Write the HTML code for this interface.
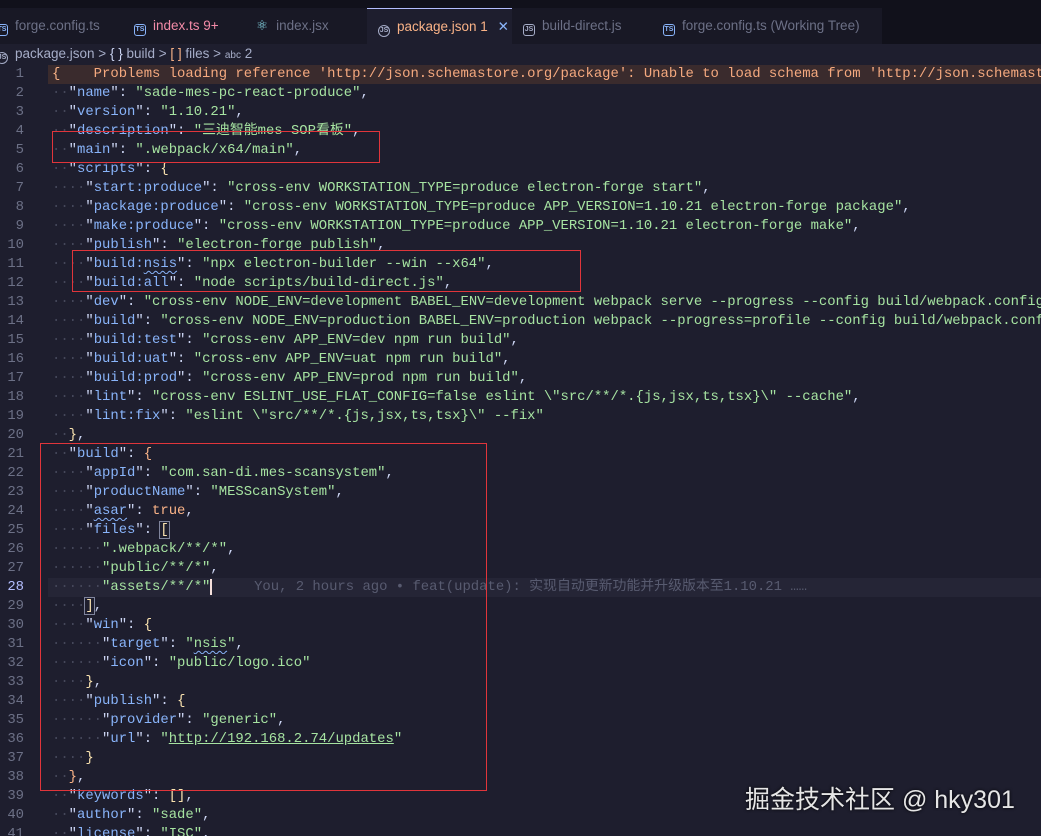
<!DOCTYPE html>
<html><head><meta charset="utf-8">
<style>
*{margin:0;padding:0;box-sizing:border-box}
html,body{width:1041px;height:836px;overflow:hidden}
body{background:#1e1e2e;position:relative;font-family:"Liberation Sans","Noto Sans CJK SC",sans-serif}
.tabs{position:absolute;left:0;top:0;width:1041px;height:44px;background:#11111b;overflow:hidden}
.tabstrip{position:absolute;left:0;top:8px;width:882px;height:36px;background:#181825}
.tab{position:absolute;top:8px;height:36px;line-height:36px;font-size:13.5px;color:#6c7086;white-space:nowrap}
.tab.active{background:#1e1e2e;color:#fab387;border-top:1px solid #b4befe}
.ic{display:inline-block;width:12px;height:12px;border:1.2px solid currentColor;border-radius:3px;font-size:7px;line-height:10px;text-align:center;vertical-align:-1px;margin-right:7px;font-weight:bold}
.crumb{position:absolute;left:0;top:44px;height:20px;line-height:20px;font-size:13.5px;color:#a6adc8;white-space:nowrap}
.code{position:absolute;left:0;top:65px;width:1041px;height:771px;overflow:hidden;font-family:"Liberation Mono","Noto Sans CJK SC",monospace;font-size:13.9px;line-height:19px;color:#cdd6f4}
.ln{display:block;height:19px;position:relative;overflow:hidden}
.n{position:absolute;left:0;top:0;width:24px;text-align:right;color:#6c7086}
.t{position:absolute;left:52px;top:0;white-space:pre}
.k{color:#89b4fa}.s{color:#a6e3a1}.o{color:#fab387}.y{color:#f9e2af}.d{color:#45475a}
.err::before,.cur::before{content:"";position:absolute;left:48px;right:0;top:0;bottom:0}
.err::before{background:#3a2b2d}
.cur::before{background:#252536}
.box{position:absolute;border:1.5px solid #e0353b}
.wm{position:absolute;left:745px;top:780px;font-size:25px;color:#e6e6e6;text-shadow:0 0 3px #000;white-space:nowrap}
.sq{text-decoration:underline wavy #89b4fa;text-underline-offset:3px;text-decoration-thickness:1px}
.ul{text-decoration:underline}
</style></head><body>
<div class="tabs"><div class="tabstrip"></div>
<div class="tab" style="left:-4px;width:124px"><span class="ic" style="color:#89b4fa">TS</span>forge.config.ts</div>
<div class="tab" style="left:134px;width:110px;color:#f38ba8"><span class="ic" style="color:#89b4fa">TS</span>index.ts 9+</div>
<div class="tab" style="left:256px;width:110px"><span style="color:#89dceb;margin-right:8px">⚛</span>index.jsx</div>
<div class="tab active" style="left:367px;width:145px;padding-left:11px"><span class="ic" style="color:#a6adc8;border-radius:50%">JS</span>package.json 1 <span style="color:#89b4fa;margin-left:6px">✕</span></div>
<div class="tab" style="left:523px;width:130px"><span class="ic" style="color:#a6adc8">JS</span>build-direct.js</div>
<div class="tab" style="left:663px;width:220px"><span class="ic" style="color:#89b4fa">TS</span>forge.config.ts (Working Tree)</div>
</div>
<div class="crumb"><span class="ic" style="color:#a6adc8;border-radius:50%;margin-left:-4px">JS</span>package.json &gt; <span style="color:#cdd6f4">{ }</span> build &gt; <span style="color:#fab387">[ ]</span> files &gt; <span style="font-size:10px">abc</span> 2</div>
<div class="code"><div class="ln err"><span class="n">1</span><span class="t"><span class="o">{</span><span style="color:#f5a97f">    Problems loading reference 'http://json.schemastore.org/package': Unable to load schema from 'http://json.schemastore.org/package'</span></span></div><div class="ln"><span class="n">2</span><span class="t"><span class="d">··</span>"<span class="k">name</span>": <span class="s">"sade-mes-pc-react-produce"</span>,</span></div><div class="ln"><span class="n">3</span><span class="t"><span class="d">··</span>"<span class="k">version</span>": <span class="s">"1.10.21"</span>,</span></div><div class="ln"><span class="n">4</span><span class="t"><span class="d">··</span>"<span class="k">description</span>": <span class="s">"三迪智能mes SOP看板"</span>,</span></div><div class="ln"><span class="n">5</span><span class="t"><span class="d">··</span>"<span class="k">main</span>": <span class="s">".webpack/x64/main"</span>,</span></div><div class="ln"><span class="n">6</span><span class="t"><span class="d">··</span>"<span class="k">scripts</span>": <span class="y">{</span></span></div><div class="ln"><span class="n">7</span><span class="t"><span class="d">····</span>"<span class="k">start:produce</span>": <span class="s">"cross-env WORKSTATION_TYPE=produce electron-forge start"</span>,</span></div><div class="ln"><span class="n">8</span><span class="t"><span class="d">····</span>"<span class="k">package:produce</span>": <span class="s">"cross-env WORKSTATION_TYPE=produce APP_VERSION=1.10.21 electron-forge package"</span>,</span></div><div class="ln"><span class="n">9</span><span class="t"><span class="d">····</span>"<span class="k">make:produce</span>": <span class="s">"cross-env WORKSTATION_TYPE=produce APP_VERSION=1.10.21 electron-forge make"</span>,</span></div><div class="ln"><span class="n">10</span><span class="t"><span class="d">····</span>"<span class="k">publish</span>": <span class="s">"electron-forge publish"</span>,</span></div><div class="ln"><span class="n">11</span><span class="t"><span class="d">····</span>"<span class="k">build:<span class="sq">nsis</span></span>": <span class="s">"npx electron-builder --win --x64"</span>,</span></div><div class="ln"><span class="n">12</span><span class="t"><span class="d">····</span>"<span class="k">build:all</span>": <span class="s">"node scripts/build-direct.js"</span>,</span></div><div class="ln"><span class="n">13</span><span class="t"><span class="d">····</span>"<span class="k">dev</span>": <span class="s">"cross-env NODE_ENV=development BABEL_ENV=development webpack serve --progress --config build/webpack.config.js"</span>,</span></div><div class="ln"><span class="n">14</span><span class="t"><span class="d">····</span>"<span class="k">build</span>": <span class="s">"cross-env NODE_ENV=production BABEL_ENV=production webpack --progress=profile --config build/webpack.config.js"</span>,</span></div><div class="ln"><span class="n">15</span><span class="t"><span class="d">····</span>"<span class="k">build:test</span>": <span class="s">"cross-env APP_ENV=dev npm run build"</span>,</span></div><div class="ln"><span class="n">16</span><span class="t"><span class="d">····</span>"<span class="k">build:uat</span>": <span class="s">"cross-env APP_ENV=uat npm run build"</span>,</span></div><div class="ln"><span class="n">17</span><span class="t"><span class="d">····</span>"<span class="k">build:prod</span>": <span class="s">"cross-env APP_ENV=prod npm run build"</span>,</span></div><div class="ln"><span class="n">18</span><span class="t"><span class="d">····</span>"<span class="k">lint</span>": <span class="s">"cross-env ESLINT_USE_FLAT_CONFIG=false eslint \"src/**/*.{js,jsx,ts,tsx}\" --cache"</span>,</span></div><div class="ln"><span class="n">19</span><span class="t"><span class="d">····</span>"<span class="k">lint:fix</span>": <span class="s">"eslint \"src/**/*.{js,jsx,ts,tsx}\" --fix"</span></span></div><div class="ln"><span class="n">20</span><span class="t"><span class="d">··</span><span class="y">}</span>,</span></div><div class="ln"><span class="n">21</span><span class="t"><span class="d">··</span>"<span class="k">build</span>": <span class="o">{</span></span></div><div class="ln"><span class="n">22</span><span class="t"><span class="d">····</span>"<span class="k">appId</span>": <span class="s">"com.san-di.mes-scansystem"</span>,</span></div><div class="ln"><span class="n">23</span><span class="t"><span class="d">····</span>"<span class="k">productName</span>": <span class="s">"MESScanSystem"</span>,</span></div><div class="ln"><span class="n">24</span><span class="t"><span class="d">····</span>"<span class="k sq">asar</span>": <span class="o">true</span>,</span></div><div class="ln"><span class="n">25</span><span class="t"><span class="d">····</span>"<span class="k">files</span>": <span class="y" style="outline:1px solid #7f849c">[</span></span></div><div class="ln"><span class="n">26</span><span class="t"><span class="d">······</span><span class="s">".webpack/**/*"</span>,</span></div><div class="ln"><span class="n">27</span><span class="t"><span class="d">······</span><span class="s">"public/**/*"</span>,</span></div><div class="ln cur"><span class="n" style="color:#b4befe">28</span><span class="t"><span class="d">······</span><span class="s">"assets/**/*"</span><span style="border-left:2px solid #f5e0dc"></span>     <span style="color:#585b70">You, 2 hours ago • feat(update): 实现自动更新功能并升级版本至1.10.21 ……</span></span></div><div class="ln"><span class="n">29</span><span class="t"><span class="d">····</span><span class="y" style="outline:1px solid #7f849c">]</span>,</span></div><div class="ln"><span class="n">30</span><span class="t"><span class="d">····</span>"<span class="k">win</span>": <span class="y">{</span></span></div><div class="ln"><span class="n">31</span><span class="t"><span class="d">······</span>"<span class="k">target</span>": <span class="s">"<span class="sq">nsis</span>"</span>,</span></div><div class="ln"><span class="n">32</span><span class="t"><span class="d">······</span>"<span class="k">icon</span>": <span class="s">"public/logo.ico"</span></span></div><div class="ln"><span class="n">33</span><span class="t"><span class="d">····</span><span class="y">}</span>,</span></div><div class="ln"><span class="n">34</span><span class="t"><span class="d">····</span>"<span class="k">publish</span>": <span class="y">{</span></span></div><div class="ln"><span class="n">35</span><span class="t"><span class="d">······</span>"<span class="k">provider</span>": <span class="s">"generic"</span>,</span></div><div class="ln"><span class="n">36</span><span class="t"><span class="d">······</span>"<span class="k">url</span>": <span class="s">"<span class="ul">http://192.168.2.74/updates</span>"</span></span></div><div class="ln"><span class="n">37</span><span class="t"><span class="d">····</span><span class="y">}</span></span></div><div class="ln"><span class="n">38</span><span class="t"><span class="d">··</span><span class="o">}</span>,</span></div><div class="ln"><span class="n">39</span><span class="t"><span class="d">··</span>"<span class="k">keywords</span>": <span class="y">[]</span>,</span></div><div class="ln"><span class="n">40</span><span class="t"><span class="d">··</span>"<span class="k">author</span>": <span class="s">"sade"</span>,</span></div><div class="ln"><span class="n">41</span><span class="t"><span class="d">··</span>"<span class="k">license</span>": <span class="s">"ISC"</span>,</span></div></div>
<div class="box" style="left:52px;top:131px;width:328px;height:32px"></div>
<div class="box" style="left:72px;top:250px;width:509px;height:42px"></div>
<div class="box" style="left:40px;top:443px;width:447px;height:348px"></div>
<div class="wm">掘金技术社区 @ hky301</div>
</body></html>
